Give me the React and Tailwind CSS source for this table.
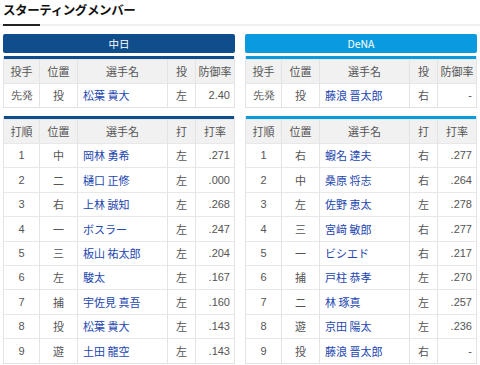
import React from 'react';

const teams = [
  {
    name: '中日',
    color: 'bg-[#0f4d8d]',
    pitcher: { pos: '投', name: '松葉 貴大', hand: '左', era: '2.40' },
    order: [
      ['1', '中', '岡林 勇希', '左', '.271'],
      ['2', '二', '樋口 正修', '左', '.000'],
      ['3', '右', '上林 誠知', '左', '.268'],
      ['4', '一', 'ボスラー', '左', '.247'],
      ['5', '三', '板山 祐太郎', '左', '.204'],
      ['6', '左', '駿太', '左', '.167'],
      ['7', '捕', '宇佐見 真吾', '左', '.160'],
      ['8', '投', '松葉 貴大', '左', '.143'],
      ['9', '遊', '土田 龍空', '左', '.143'],
    ],
  },
  {
    name: 'DeNA',
    color: 'bg-[#0a9ade]',
    pitcher: { pos: '投', name: '藤浪 晋太郎', hand: '右', era: '-' },
    order: [
      ['1', '右', '蝦名 達夫', '右', '.277'],
      ['2', '中', '桑原 将志', '右', '.264'],
      ['3', '左', '佐野 恵太', '左', '.278'],
      ['4', '三', '宮﨑 敏郎', '右', '.277'],
      ['5', '一', 'ビシエド', '右', '.217'],
      ['6', '捕', '戸柱 恭孝', '左', '.270'],
      ['7', '二', '林 琢真', '左', '.257'],
      ['8', '遊', '京田 陽太', '左', '.236'],
      ['9', '投', '藤浪 晋太郎', '右', '-'],
    ],
  },
];

const cols = 'grid grid-cols-[35px_38px_1fr_28px_39px]';
const cell = 'flex items-center justify-center border-l border-[#e3e3e3] first:border-l-0';

const Row = ({ cells, head, h }) => (
  <div className={`${cols} ${h} border-t border-[#e8e8e8] first:border-t-0 ${head ? 'bg-[#f1f1f1]' : 'bg-white'}`}>
    {cells.map((c, i) => {
      let align = '';
      if (!head && i === 2) align = '!justify-start pl-[5px] text-[#2346b0]';
      if (!head && i === 4) align = '!justify-end pr-[4px] font-["Liberation_Sans",sans-serif]';
      if (!head && i === 0) align = 'font-["Liberation_Sans",sans-serif]';
      return (
        <div key={i} className={`${cell} ${align}`}>
          {c}
        </div>
      );
    })}
  </div>
);

const Table = ({ color, head, rows, h }) => (
  <div className="border-x border-b border-[#e3e3e3]">
    <div className={`h-[3px] ${color}`} />
    <Row cells={head} head h="h-[24px]" />
    {rows.map((r, i) => (
      <Row key={i} cells={r} h={h} />
    ))}
  </div>
);

export default function App() {
  return (
    <div className="w-[480px] h-[365px] bg-white px-[3px] overflow-hidden text-[#555] text-[11px] font-['Noto_Sans_CJK_JP','Liberation_Sans',sans-serif]">
      <div className="pt-[2px] text-[12.5px] font-bold leading-[16px] text-[#111] tracking-[-0.4px]">
        スターティングメンバー
      </div>
      <div className="mt-[6px] -mx-[3px] h-[2px] bg-[#f0f0f0] pl-[3px]">
        <div className="w-[37px] h-[2px] bg-[#222]" />
      </div>
      <div className="grid grid-cols-2 gap-[10px] mt-[8px]">
        {teams.map((t) => (
          <div key={t.name}>
            <div className={`${t.color} h-[19px] rounded-[2px] flex items-center justify-center text-white text-[10.5px]`}>
              {t.name}
            </div>
            <div className="mt-[3px]">
              <Table
                color={t.color}
                head={['投手', '位置', '選手名', '投', '防御率']}
                rows={[['先発', t.pitcher.pos, t.pitcher.name, t.pitcher.hand, t.pitcher.era]]}
                h="h-[24px]"
              />
            </div>
            <div className="mt-[8px]">
              <Table
                color={t.color}
                head={['打順', '位置', '選手名', '打', '打率']}
                rows={t.order}
                h="h-[24.4px]"
              />
            </div>
          </div>
        ))}
      </div>
    </div>
  );
}
